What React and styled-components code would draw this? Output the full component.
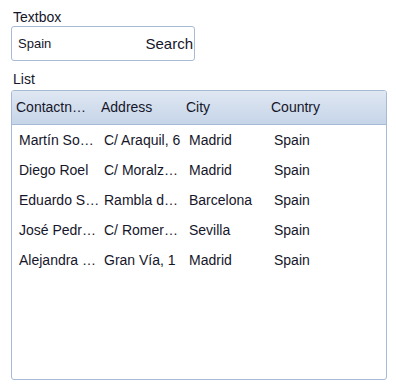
import React from "react";
import styled, { createGlobalStyle } from "styled-components";

const Global = createGlobalStyle`
  html, body { margin: 0; padding: 0; background: #fff; }
  body { font-family: "Liberation Sans", Arial, sans-serif; color: #16162a; }
`;

const Page = styled.div`
  display: flex;
  flex-direction: column;
  padding: 9px 0 0 11px;
  width: 376px;
`;

const Label = styled.div`
  font-size: 14px;
  line-height: 16px;
  padding-left: 2px;
  margin-top: ${(p) => p.$mt || 0}px;
  margin-bottom: ${(p) => p.$mb || 0}px;
`;

const TextBox = styled.div`
  box-sizing: border-box;
  width: 184px;
  height: 35px;
  border: 1px solid #a9bbd4;
  border-radius: 3px;
  display: flex;
  align-items: center;
  justify-content: space-between;
  padding: 0 1px 0 6px;
  margin-top: 1px;
`;

const Input = styled.span`
  font-size: 13px;
`;

const SearchBtn = styled.span`
  font-size: 15px;
`;

const ListBox = styled.div`
  box-sizing: border-box;
  width: 376px;
  height: 290px;
  border: 1px solid #a5bad6;
  border-radius: 3px;
  overflow: hidden;
`;

const Header = styled.div`
  display: grid;
  grid-template-columns: repeat(4, 85px);
  height: 33px;
  align-items: center;
  padding-left: 4px;
  background: linear-gradient(#dfe7f2, #c6d5e9);
  border-bottom: 1px solid #a5bad6;
  line-height: 16px;
`;

const HeadCell = styled.div`
  font-size: 14px;
  white-space: nowrap;
  overflow: hidden;
  text-overflow: ellipsis;
  padding-right: 10px;
  margin-top: -1px;
`;

const Row = styled.div`
  display: grid;
  grid-template-columns: repeat(4, 85px);
  height: 30px;
  align-items: center;
  padding-left: 7px;
`;

const Cell = styled.div`
  font-size: 14px;
  white-space: nowrap;
  overflow: hidden;
  text-overflow: ellipsis;
  padding-right: 4px;
`;

const rows = [
  ["Martín Sommer", "C/ Araquil, 6", "Madrid", "Spain"],
  ["Diego Roel", "C/ Moralzarzal, 86", "Madrid", "Spain"],
  ["Eduardo Saavedra", "Rambla de Cataluña, 23", "Barcelona", "Spain"],
  ["José Pedro Freyre", "C/ Romero, 33", "Sevilla", "Spain"],
  ["Alejandra Camino", "Gran Vía, 1", "Madrid", "Spain"],
];

export default function App() {
  return (
    <>
      <Global />
      <Page>
        <Label>Textbox</Label>
        <TextBox>
          <Input>Spain</Input>
          <SearchBtn>Search</SearchBtn>
        </TextBox>
        <Label $mt={10} $mb={3}>List</Label>
        <ListBox>
          <Header>
            <HeadCell>Contactname</HeadCell>
            <HeadCell>Address</HeadCell>
            <HeadCell>City</HeadCell>
            <HeadCell>Country</HeadCell>
          </Header>
          {rows.map((r, i) => (
            <Row key={i}>
              {r.map((c, j) => (
                <Cell key={j}>{c}</Cell>
              ))}
            </Row>
          ))}
        </ListBox>
      </Page>
    </>
  );
}
